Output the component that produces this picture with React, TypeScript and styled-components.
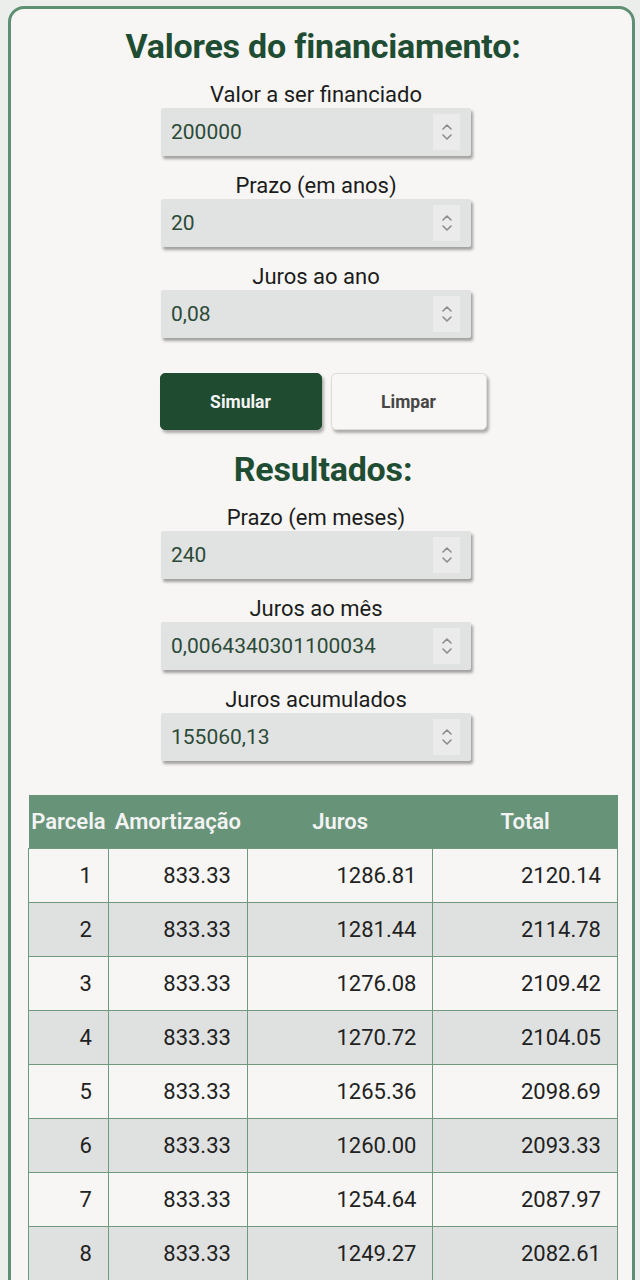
import React from "react";
import styled, { createGlobalStyle } from "styled-components";

const Global = createGlobalStyle`
  html, body {
    margin: 0;
    padding: 0;
    background: #eceeec;
    font-family: Roboto, "Liberation Sans", sans-serif;
  }
  body {
    padding: 6px 5px 0 8px;
  }
`;

const Card = styled.main`
  background: #f7f6f4;
  border: 3px solid #5f8f72;
  border-radius: 16px;
  padding: 17px 14px 40px 17px;
  display: flex;
  flex-direction: column;
  align-items: center;
  box-sizing: border-box;
  height: 1320px;
  overflow: hidden;
`;

const Title = styled.h1<{ $top?: number }>`
  margin: ${(p) => p.$top ?? 0}px 0 0 0;
  font-size: 34px;
  line-height: 40px;
  font-weight: 700;
  color: #1f4d33;
  letter-spacing: -0.2px;
`;

const Form = styled.div`
  display: flex;
  flex-direction: column;
  align-items: center;
  margin-right: 14px;
`;

const Field = styled.label<{ $gap?: number }>`
  display: flex;
  flex-direction: column;
  align-items: center;
  margin-top: ${(p) => p.$gap ?? 17}px;
  width: 310px;
`;

const LabelText = styled.span`
  font-size: 22px;
  line-height: 26px;
  color: #1c1c1c;
`;

const InputBox = styled.div`
  width: 310px;
  height: 48px;
  background: #e1e3e2;
  border-radius: 2px;
  box-shadow: 2px 3px 3px rgba(0, 0, 0, 0.35);
  display: flex;
  align-items: center;
  padding: 0 10px 0 10px;
  box-sizing: border-box;
`;

const Value = styled.input`
  flex: 1;
  min-width: 0;
  border: none;
  background: transparent;
  outline: none;
  font-family: Roboto, "Liberation Sans", sans-serif;
  font-size: 21px;
  color: #2c4a38;
  padding: 0;
`;

const Spinner = styled.span`
  width: 27px;
  height: 36px;
  background: #ebebeb;
  display: flex;
  align-items: center;
  justify-content: center;
  margin-right: 1px;
`;

const Buttons = styled.div`
  display: flex;
  gap: 9px;
  margin-top: 35px;
`;

const Button = styled.button<{ $primary?: boolean }>`
  width: ${(p) => (p.$primary ? 162 : 156)}px;
  height: 57px;
  border-radius: 5px;
  font-family: Roboto, "Liberation Sans", sans-serif;
  font-size: 17.5px;
  font-weight: 700;
  cursor: pointer;
  background: ${(p) => (p.$primary ? "#1f4b30" : "#f8f7f5")};
  color: ${(p) => (p.$primary ? "#f4f4f4" : "#474747")};
  border: ${(p) => (p.$primary ? "1px solid #1f4b30" : "1px solid #dcdcdc")};
  box-shadow: 2px 3px 3px rgba(0, 0, 0, 0.3);
`;

const Table = styled.table`
  margin-top: 34px;
  width: 590px;
  border-collapse: collapse;
  font-size: 22px;
  color: #222;
`;

const Th = styled.th`
  background: #679479;
  color: #f3f3f3;
  font-weight: 600;
  height: 53px;
  padding: 0;
  text-align: center;
  white-space: nowrap;
`;

const Row = styled.tr<{ $even: boolean }>`
  background: ${(p) => (p.$even ? "#dfe1e0" : "#f7f6f4")};
`;

const Td = styled.td`
  height: 53px;
  border: 1px solid #6f9a7f;
  text-align: right;
  padding: 0 16px 0 0;
`;

function SpinIcon() {
  return (
    <svg width="12" height="22" viewBox="0 0 12 22" fill="none">
      <path d="M2 8 L6 4 L10 8" stroke="#8c8c8c" strokeWidth="1.6" strokeLinecap="round" strokeLinejoin="round" />
      <path d="M2 14 L6 18 L10 14" stroke="#8c8c8c" strokeWidth="1.6" strokeLinecap="round" strokeLinejoin="round" />
    </svg>
  );
}

function NumberField({ label, value, first }: { label: string; value: string; first?: boolean }) {
  return (
    <Field $gap={first ? 16 : 17}>
      <LabelText>{label}</LabelText>
      <InputBox>
        <Value defaultValue={value} />
        <Spinner>
          <SpinIcon />
        </Spinner>
      </InputBox>
    </Field>
  );
}

const rows = [
  ["1", "833.33", "1286.81", "2120.14"],
  ["2", "833.33", "1281.44", "2114.78"],
  ["3", "833.33", "1276.08", "2109.42"],
  ["4", "833.33", "1270.72", "2104.05"],
  ["5", "833.33", "1265.36", "2098.69"],
  ["6", "833.33", "1260.00", "2093.33"],
  ["7", "833.33", "1254.64", "2087.97"],
  ["8", "833.33", "1249.27", "2082.61"],
];

export default function App() {
  return (
    <>
      <Global />
      <Card>
        <Title>Valores do financiamento:</Title>
        <Form>
          <NumberField first label="Valor a ser financiado" value="200000" />
          <NumberField label="Prazo (em anos)" value="20" />
          <NumberField label="Juros ao ano" value="0,08" />
        </Form>
        <Buttons>
          <Button $primary>Simular</Button>
          <Button>Limpar</Button>
        </Buttons>
        <Title $top={19}>Resultados:</Title>
        <Form>
          <NumberField first label="Prazo (em meses)" value="240" />
          <NumberField label="Juros ao mês" value="0,0064340301100034" />
          <NumberField label="Juros acumulados" value="155060,13" />
        </Form>
        <Table>
          <colgroup>
            <col style={{ width: 80 }} />
            <col style={{ width: 139 }} />
            <col style={{ width: 186 }} />
            <col style={{ width: 185 }} />
          </colgroup>
          <thead>
            <tr>
              <Th>Parcela</Th>
              <Th>Amortização</Th>
              <Th>Juros</Th>
              <Th>Total</Th>
            </tr>
          </thead>
          <tbody>
            {rows.map((r, i) => (
              <Row key={r[0]} $even={i % 2 === 1}>
                {r.map((c, j) => (
                  <Td key={j}>{c}</Td>
                ))}
              </Row>
            ))}
          </tbody>
        </Table>
      </Card>
    </>
  );
}
